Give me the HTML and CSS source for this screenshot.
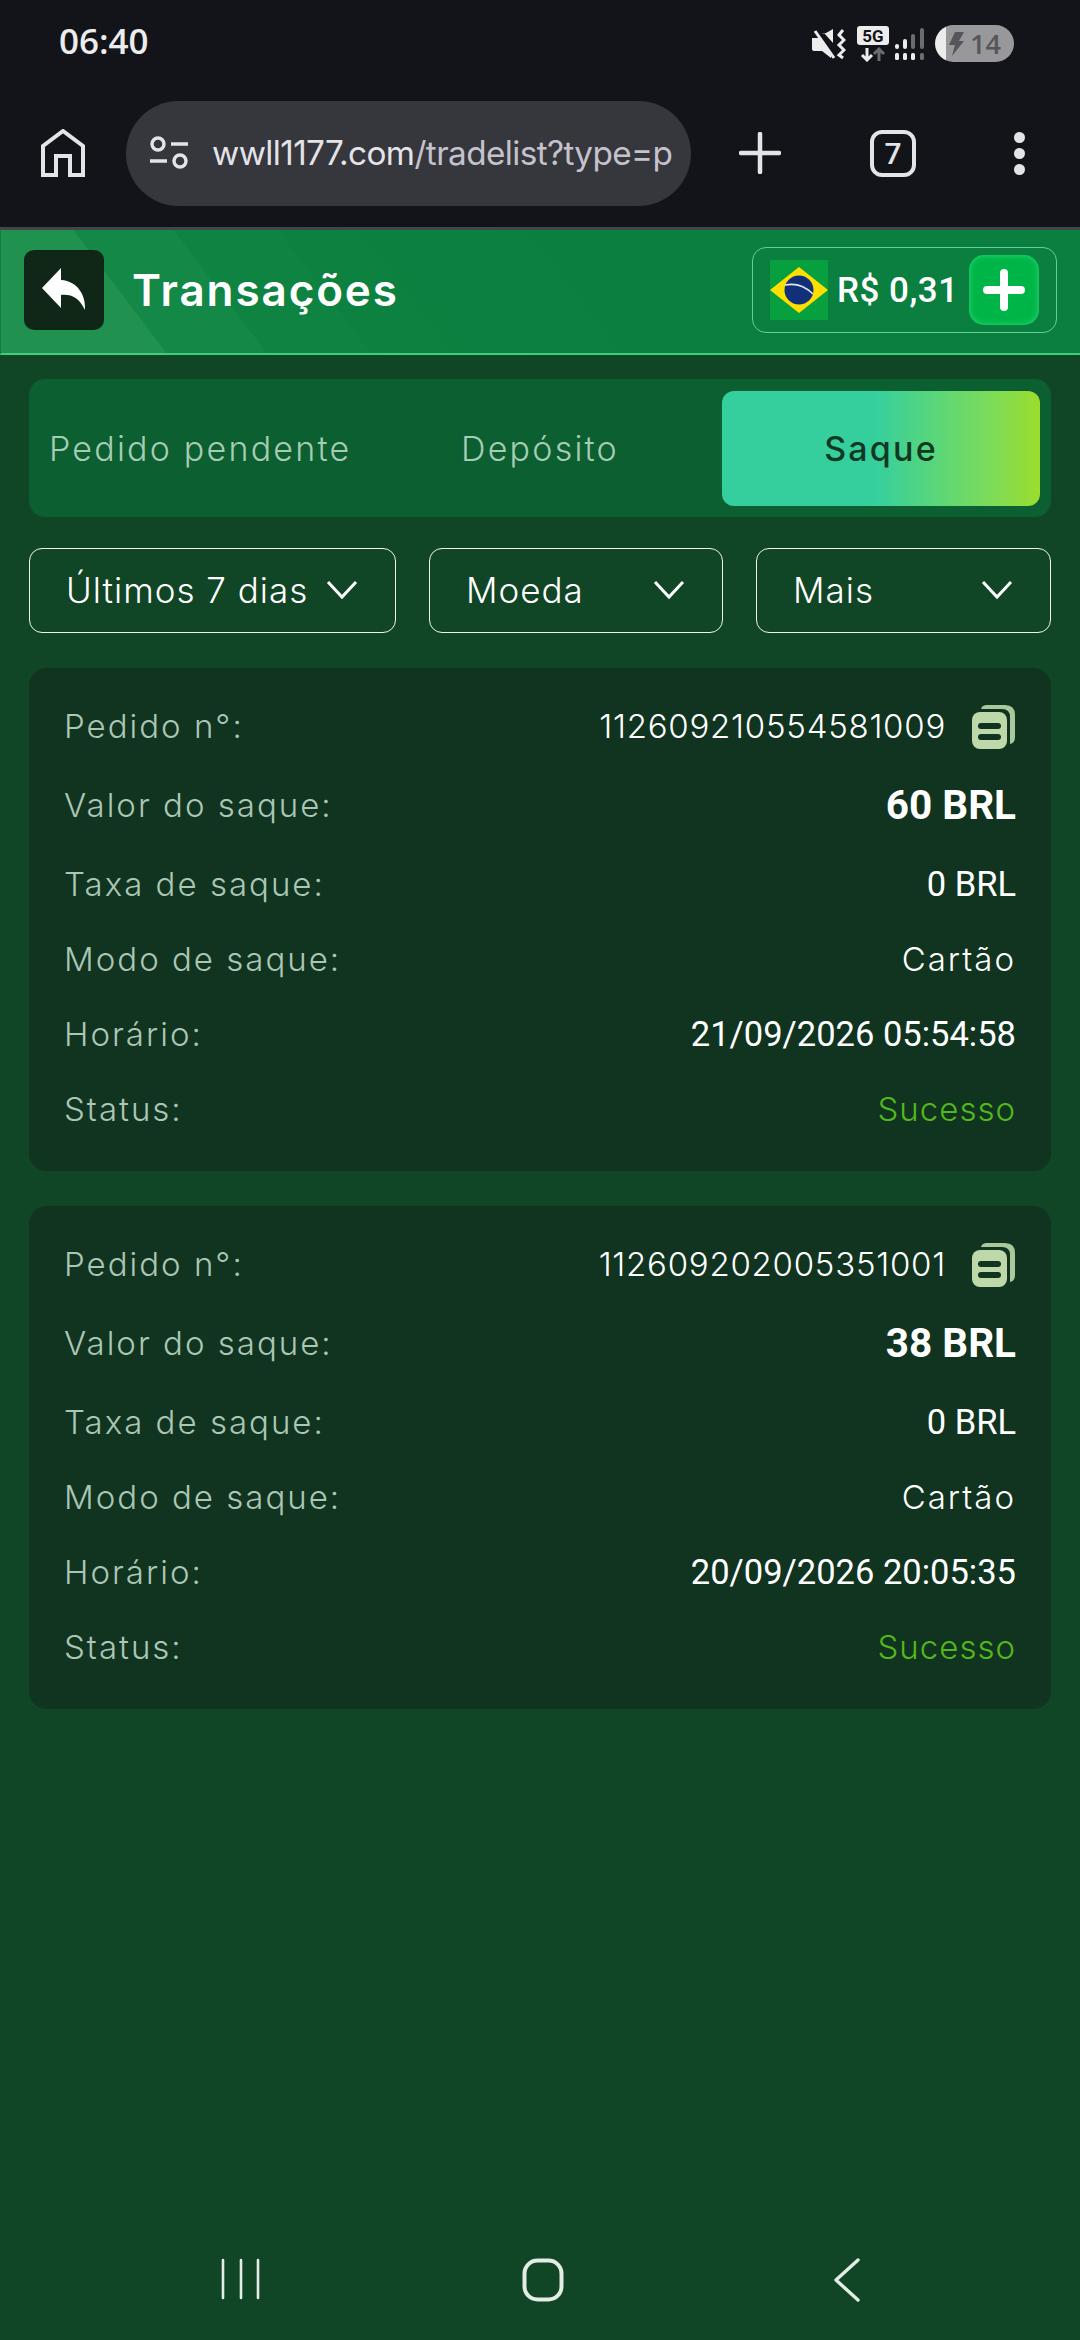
FILE: index.html
```html
<!DOCTYPE html>
<html lang="en">
<head>
    <meta charset="UTF-8">
    <meta name="viewport" content="width=device-width, initial-scale=1.0">
    <title>Transações</title>
    <link rel="stylesheet" href="styles.css">
</head>
<body>

<div class="statusbar">
    <span class="clock">06:40</span>
    <div class="status-icons">
        <svg width="34" height="32" viewBox="0 0 34 32">
            <path d="M0 10h6l2 0 11 12v8l-9-7H2q-2 0-2-2z M9 6l3-1 9 10V1l-7 4z" fill="#ececec"/>
            <path d="M4 1l18 26" stroke="#12141a" stroke-width="3"/>
            <path d="M3 3l19 27" stroke="#ececec" stroke-width="3"/>
            <path d="M31 2l-4 5 5 5-5 5 5 5-5 5 4 3" fill="none" stroke="#ececec" stroke-width="3"/>
        </svg>
        <svg class="net-icon" width="32" height="36" viewBox="0 0 32 36">
            <rect x="0" y="0" width="32" height="19" rx="3" fill="#ececec"/>
            <text x="16" y="15.5" text-anchor="middle" class="five-g">5G</text>
            <path d="M10 22v12M5 29l5 5 5-5" fill="none" stroke="#ececec" stroke-width="3"/>
            <path d="M22 35V23M17 28l5-5 5 5" fill="none" stroke="#6b6c70" stroke-width="3"/>
        </svg>
        <svg class="signal" width="29" height="32" viewBox="0 0 29 32">
            <rect x="0" y="16" width="4" height="5" rx="2" fill="#ececec"/>
            <rect x="8" y="11" width="4" height="10" rx="2" fill="#ececec"/>
            <rect x="16" y="6" width="4" height="15" rx="2" fill="#6b6c70"/>
            <rect x="25" y="0" width="4" height="21" rx="2" fill="#6b6c70"/>
            <rect x="0" y="25" width="4" height="7" rx="1.5" fill="#ececec"/>
            <rect x="8" y="25" width="4" height="7" rx="1.5" fill="#ececec"/>
            <rect x="16" y="25" width="4" height="7" rx="1.5" fill="#ececec"/>
            <rect x="25" y="25" width="4" height="7" rx="1.5" fill="#6b6c70"/>
        </svg>
        <div class="battery">
            <svg width="16" height="24" viewBox="0 0 16 24"><path d="M7 0h9l-5 9h5L4 24l3-11H1z" fill="#55565a"/></svg>
            <span>14</span>
        </div>
    </div>
</div>

<div class="toolbar">
    <svg class="home-icon" width="44" height="48" viewBox="0 0 44 48">
        <path d="M2 46V17L22 2l20 15v29H29V27H15v19z" fill="none" stroke="#e3e3e8" stroke-width="4"/>
    </svg>
    <div class="urlbar">
        <svg width="40" height="34" viewBox="0 0 40 34">
            <circle cx="9" cy="8" r="6" fill="none" stroke="#e3e3e8" stroke-width="3.4"/>
            <path d="M22 8h17M1 25h17" stroke="#e3e3e8" stroke-width="3.4"/>
            <circle cx="31" cy="25" r="6" fill="none" stroke="#e3e3e8" stroke-width="3.4"/>
        </svg>
        <div class="url"><span class="url-host">wwll1177.com</span>/tradelist?type=p</div>
    </div>
    <svg class="plus-icon" width="42" height="42" viewBox="0 0 42 42">
        <path d="M21 2v38M2 21h38" stroke="#e3e3e8" stroke-width="4.5" stroke-linecap="round"/>
    </svg>
    <div class="tabs-count">7</div>
    <div class="menu-dots"><i></i><i></i><i></i></div>
</div>

<div class="topbar">
    <div class="back-btn">
        <svg width="46" height="46" viewBox="0 0 46 46">
            <path d="M20 1L1 21l19 20V28c11-1 18 3 24 15 1-14-7-29-24-30z" fill="#fff"/>
        </svg>
    </div>
    <div class="page-title">Transações</div>
    <div class="balance">
        <svg class="flag" width="58" height="60" viewBox="0 0 58 60">
            <rect width="58" height="60" fill="#08a03f"/>
            <path d="M29 7L58 30 29 53 0 30z" fill="#fedf00"/>
            <circle cx="29" cy="30" r="14.5" fill="#12307a"/>
            <path d="M15 25c10-2 20 1 28 9" fill="none" stroke="#dfe8e8" stroke-width="1.6"/>
        </svg>
        <span class="amount">R$ 0,31</span>
        <div class="add-btn">
            <svg width="42" height="42" viewBox="0 0 42 42">
                <path d="M21 4v34M4 21h34" stroke="#fff" stroke-width="8" stroke-linecap="round"/>
            </svg>
        </div>
    </div>
</div>

<div class="content">
    <div class="tab-bar">
        <div class="tab tab-first">Pedido pendente</div>
        <div class="tab">Depósito</div>
        <div class="tab tab-active">Saque</div>
    </div>

    <div class="filters">
        <div class="filter filter-days"><span>Últimos 7 dias</span><svg class="chev" width="32" height="20" viewBox="0 0 32 20"><path d="M2 2l14 15L30 2" fill="none" stroke="#fff" stroke-width="3"/></svg></div>
        <div class="filter filter-coin"><span>Moeda</span><svg class="chev" width="32" height="20" viewBox="0 0 32 20"><path d="M2 2l14 15L30 2" fill="none" stroke="#fff" stroke-width="3"/></svg></div>
        <div class="filter filter-more"><span>Mais</span><svg class="chev" width="32" height="20" viewBox="0 0 32 20"><path d="M2 2l14 15L30 2" fill="none" stroke="#fff" stroke-width="3"/></svg></div>
    </div>

    <div class="card">
        <div class="row row-order"><span class="label">Pedido n°:</span><span class="value value-order">112609210554581009<svg class="copy" width="44" height="45" viewBox="0 0 44 45"><path d="M9 5q1-4 6-4h18q10 0 10 10v22q0 6-5 7V13q0-8-8-8z" fill="#a9c99b"/><rect x="0" y="8" width="35" height="37" rx="8" fill="#bfd8a9"/><rect x="6" y="19" width="23" height="6" rx="3" fill="#103420"/><rect x="6" y="30" width="23" height="6" rx="3" fill="#103420"/></svg></span></div>
        <div class="row row-amount"><span class="label">Valor do saque:</span><span class="value value-big">60 BRL</span></div>
        <div class="row"><span class="label">Taxa de saque:</span><span class="value">0 BRL</span></div>
        <div class="row"><span class="label">Modo de saque:</span><span class="value value-text">Cartão</span></div>
        <div class="row"><span class="label">Horário:</span><span class="value">21/09/2026 05:54:58</span></div>
        <div class="row"><span class="label">Status:</span><span class="value value-ok">Sucesso</span></div>
    </div>

    <div class="card">
        <div class="row row-order"><span class="label">Pedido n°:</span><span class="value value-order">112609202005351001<svg class="copy" width="44" height="45" viewBox="0 0 44 45"><path d="M9 5q1-4 6-4h18q10 0 10 10v22q0 6-5 7V13q0-8-8-8z" fill="#a9c99b"/><rect x="0" y="8" width="35" height="37" rx="8" fill="#bfd8a9"/><rect x="6" y="19" width="23" height="6" rx="3" fill="#103420"/><rect x="6" y="30" width="23" height="6" rx="3" fill="#103420"/></svg></span></div>
        <div class="row row-amount"><span class="label">Valor do saque:</span><span class="value value-big">38 BRL</span></div>
        <div class="row"><span class="label">Taxa de saque:</span><span class="value">0 BRL</span></div>
        <div class="row"><span class="label">Modo de saque:</span><span class="value value-text">Cartão</span></div>
        <div class="row"><span class="label">Horário:</span><span class="value">20/09/2026 20:05:35</span></div>
        <div class="row"><span class="label">Status:</span><span class="value value-ok">Sucesso</span></div>
    </div>
</div>

<div class="navbar">
    <svg width="40" height="42" viewBox="0 0 40 42"><path d="M2 2v38M20 2v38M37 2v38" stroke="#e4ece6" stroke-width="2.6" stroke-linecap="round"/></svg>
    <svg width="42" height="44" viewBox="0 0 42 44"><rect x="2.5" y="2.5" width="37" height="39" rx="13" fill="none" stroke="#e4ece6" stroke-width="4"/></svg>
    <svg width="28" height="44" viewBox="0 0 28 44"><path d="M25 2L3 22l22 20" fill="none" stroke="#e4ece6" stroke-width="3.4" stroke-linecap="round" stroke-linejoin="round"/></svg>
</div>

</body>
</html>
```

FILE: styles.css
```css
* {
    box-sizing: border-box;
}

body {
    margin: 0;
    width: 1080px;
    height: 2340px;
    display: flex;
    flex-direction: column;
    background-color: #104526;
    font-family: Inter, "Noto Sans", sans-serif;
    color: #ffffff;
    overflow: hidden;
}

.statusbar {
    height: 84px;
    background-color: #12141a;
    display: flex;
    justify-content: space-between;
    align-items: center;
    padding: 3px 66px 0 59px;
}

.clock {
    margin-top: -6px;
    font-family: "Open Sans", sans-serif;
    font-size: 35px;
    font-weight: 600;
    color: #ececec;
}

.status-icons {
    display: flex;
    align-items: center;
    gap: 11px;
}

.net-icon {
    margin-right: -5px;
}

.five-g {
    font-family: Roboto, sans-serif;
    font-size: 17px;
    font-weight: 700;
    fill: #12141a;
}

.battery {
    width: 79px;
    height: 37px;
    border-radius: 19px;
    background: linear-gradient(90deg, #ececec 0, #ececec 11px, #98989a 11px);
    display: flex;
    align-items: center;
    gap: 6px;
    padding-left: 13px;
    color: #55565a;
    font-family: "Open Sans", sans-serif;
    font-size: 27px;
    font-weight: 600;
}

.toolbar {
    height: 146px;
    background-color: #12141a;
    display: flex;
    align-items: center;
    padding: 0 0 5px 41px;
    border-bottom: 3px solid #44454b;
}

.urlbar {
    width: 565px;
    height: 105px;
    margin-left: 41px;
    border-radius: 53px;
    background-color: #36363d;
    display: flex;
    align-items: center;
    gap: 23px;
    padding-left: 23px;
    overflow: hidden;
}

.url {
    font-family: Inter, sans-serif;
    font-size: 33.3px;
    color: #c4c3cc;
    letter-spacing: -0.6px;
    white-space: nowrap;
}

.url-host {
    color: #e3e3e8;
}

.plus-icon {
    margin-left: 48px;
}

.tabs-count {
    width: 46px;
    height: 47px;
    margin-left: 89px;
    border: 4px solid #e3e3e8;
    border-radius: 12px;
    display: flex;
    justify-content: center;
    align-items: center;
    font-family: Roboto, sans-serif;
    font-size: 30px;
    font-weight: 500;
    color: #e3e3e8;
}

.menu-dots {
    margin-left: 98px;
    display: flex;
    flex-direction: column;
    gap: 5px;
}

.menu-dots i {
    width: 11px;
    height: 11px;
    border-radius: 50%;
    background-color: #e3e3e8;
}

.topbar {
    height: 125px;
    display: flex;
    align-items: center;
    padding: 0 24px 3px 23px;
    background-color: #0a7f3f;
    background-image: linear-gradient(53deg, #21914f 0, #21914f 132px, #148847 132px, #148847 212px, #0f8442 212px, #0f8442 295px, #0c8140 295px, #0a7f3f 560px);
    border-bottom: 2px solid #3fcf7a;
    border-left: 1px solid #0a7f3f;
}

.back-btn {
    width: 80px;
    height: 80px;
    border-radius: 10px;
    background-color: #102617;
    display: flex;
    justify-content: center;
    align-items: center;
}

.page-title {
    margin-left: 28px;
    font-size: 44px;
    font-weight: 600;
    letter-spacing: 1.9px;
    flex: 1;
}

.balance {
    width: 305px;
    height: 86px;
    margin-right: -1px;
    border: 1px solid #5fd28f;
    border-radius: 14px;
    display: flex;
    align-items: center;
    padding: 0 17px;
}

.amount {
    margin-left: 9px;
    font-family: Roboto, sans-serif;
    font-size: 35px;
    font-weight: 500;
    letter-spacing: 0.5px;
    white-space: nowrap;
}

.add-btn {
    width: 70px;
    height: 70px;
    margin-left: auto;
    border-radius: 15px;
    background-color: #00b548;
    box-shadow: inset 0 0 6px #26dd72;
    display: flex;
    justify-content: center;
    align-items: center;
}

.content {
    flex: 1;
    padding: 24px 29px 0;
}

.tab-bar {
    height: 138px;
    border-radius: 16px;
    background-color: #0c5f30;
    display: flex;
    align-items: center;
    padding: 0 11px 0 20px;
}

.tab {
    font-size: 34px;
    font-weight: 300;
    color: #a6cdb4;
    letter-spacing: 2.2px;
    text-align: center;
    width: 364px;
    white-space: nowrap;
}

.tab-first {
    width: 309px;
    text-align: left;
}

.tab-active {
    width: 318px;
    height: 115px;
    border-radius: 12px;
    background: linear-gradient(90deg, #35cf9e 0, #35cf9e 48%, #7ddc58 85%, #9cdd2c 100%);
    color: #113822;
    font-weight: 500;
    line-height: 115px;
}

.filters {
    display: flex;
    justify-content: space-between;
    margin-top: 31px;
}

.filter {
    height: 85px;
    border: 1px solid #f0f5f1;
    border-radius: 13px;
    display: flex;
    justify-content: space-between;
    align-items: center;
    padding: 0 37px 2px 36px;
    font-size: 35px;
    font-weight: 300;
    letter-spacing: 1px;
}

.filter-days {
    width: 367px;
}

.filter-coin {
    width: 294px;
}

.filter-more {
    width: 295px;
}

.card {
    height: 503px;
    margin-top: 35px;
    padding: 20px 35px 0;
    border-radius: 18px;
    background-color: #103420;
}

.row {
    height: 75px;
    display: flex;
    justify-content: space-between;
    align-items: center;
}

.row-order {
    height: 76px;
}

.row-amount {
    height: 82px;
}

.label {
    font-size: 33px;
    font-weight: 300;
    color: #abc6b4;
    letter-spacing: 2px;
}

.value {
    display: flex;
    align-items: center;
    font-family: Roboto, sans-serif;
    font-size: 34.5px;
    color: #ffffff;
}

.value-order {
    font-family: Inter, sans-serif;
    font-size: 33px;
    font-weight: 300;
    letter-spacing: 0.75px;
}

.value-big {
    font-size: 40.5px;
    font-weight: 700;
}

.value-text {
    font-family: Inter, sans-serif;
    font-size: 33px;
    font-weight: 300;
    letter-spacing: 2px;
}

.value-ok {
    font-family: Inter, sans-serif;
    font-size: 33px;
    font-weight: 300;
    letter-spacing: 1px;
    color: #52b81c;
}

.copy {
    margin-left: 26px;
}

.navbar {
    height: 136px;
    display: flex;
    align-items: flex-start;
    padding-top: 54px;
}

.navbar svg:nth-child(1) {
    margin-left: 221px;
}

.navbar svg:nth-child(2) {
    margin-left: 261px;
}

.navbar svg:nth-child(3) {
    margin-left: 269px;
}
```
